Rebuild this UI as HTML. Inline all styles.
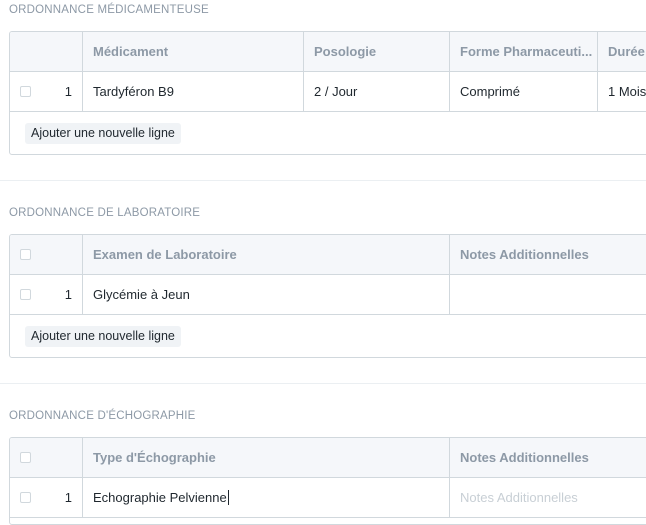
<!DOCTYPE html>
<html><head><style>
*{margin:0;padding:0;box-sizing:border-box}
html,body{width:646px;height:525px;overflow:hidden}
body{background:#fff;font-family:"Liberation Sans",sans-serif;font-size:13px;color:#1f272e;position:relative}
.t{position:absolute;left:9px;font-size:11.5px;color:#8d99a6;letter-spacing:.2px}
.tb{position:absolute;left:9px;width:700px;border:1px solid #d1d8dd;border-radius:3px;overflow:hidden}
.r{position:relative;height:40px;border-bottom:1px solid #d1d8dd}
.h{background:#f5f7fa;font-weight:bold;color:#8d99a6}
.c{position:absolute;top:0;height:39px;line-height:39px;padding-left:10px;border-left:1px solid #d1d8dd;white-space:nowrap;overflow:hidden}
.cb{position:absolute;left:10px;top:14px;width:11px;height:11px;border:1px solid #d1d8dd;border-radius:2px;background:#fff}
.n{position:absolute;left:50px;top:0;line-height:39px;width:12px;text-align:right}
.f{height:42px;position:relative}
.btn{position:absolute;left:15px;top:11px;background:#f0f3f6;border-radius:3px;padding:0 6px;line-height:21px;color:#1f272e;font-size:12.5px}
.sep{position:absolute;left:0;width:646px;height:1px;background:#ebeff2}
</style></head><body>
<div class="t" style="top:4px">ORDONNANCE MÉDICAMENTEUSE</div>
<div class="tb" style="top:31px;height:124px">
 <div class="r h"><div class="c" style="left:72px;width:221px">Médicament</div><div class="c" style="left:293px;width:146px">Posologie</div><div class="c" style="left:439px;width:148px">Forme Pharmaceuti...</div><div class="c" style="left:587px;width:120px">Durée d</div></div>
 <div class="r"><div class="cb"></div><div class="n">1</div><div class="c" style="left:72px;width:221px">Tardyféron B9</div><div class="c" style="left:293px;width:146px">2 / Jour</div><div class="c" style="left:439px;width:148px">Comprimé</div><div class="c" style="left:587px;width:120px">1 Mois</div></div>
 <div class="f"><span class="btn">Ajouter une nouvelle ligne</span></div>
</div>
<div class="sep" style="top:180px"></div>
<div class="t" style="top:207px">ORDONNANCE DE LABORATOIRE</div>
<div class="tb" style="top:234px;height:124px">
 <div class="r h"><div class="cb"></div><div class="c" style="left:72px;width:367px">Examen de Laboratoire</div><div class="c" style="left:439px;width:260px">Notes Additionnelles</div></div>
 <div class="r"><div class="cb"></div><div class="n">1</div><div class="c" style="left:72px;width:367px">Glycémie à Jeun</div><div class="c" style="left:439px;width:260px"></div></div>
 <div class="f"><span class="btn">Ajouter une nouvelle ligne</span></div>
</div>
<div class="sep" style="top:383px"></div>
<div class="t" style="top:410px">ORDONNANCE D'ÉCHOGRAPHIE</div>
<div class="tb" style="top:437px;height:88px">
 <div class="r h"><div class="cb"></div><div class="c" style="left:72px;width:367px">Type d'Échographie</div><div class="c" style="left:439px;width:260px">Notes Additionnelles</div></div>
 <div class="r"><div class="cb"></div><div class="n">1</div><div class="c" style="left:72px;width:367px">Echographie Pelvienne<span style="border-left:1px solid #1f272e;margin-left:1px"></span></div><div class="c" style="left:439px;width:260px;color:#c8cfd5">Notes Additionnelles</div></div>
</div>
</body></html>
